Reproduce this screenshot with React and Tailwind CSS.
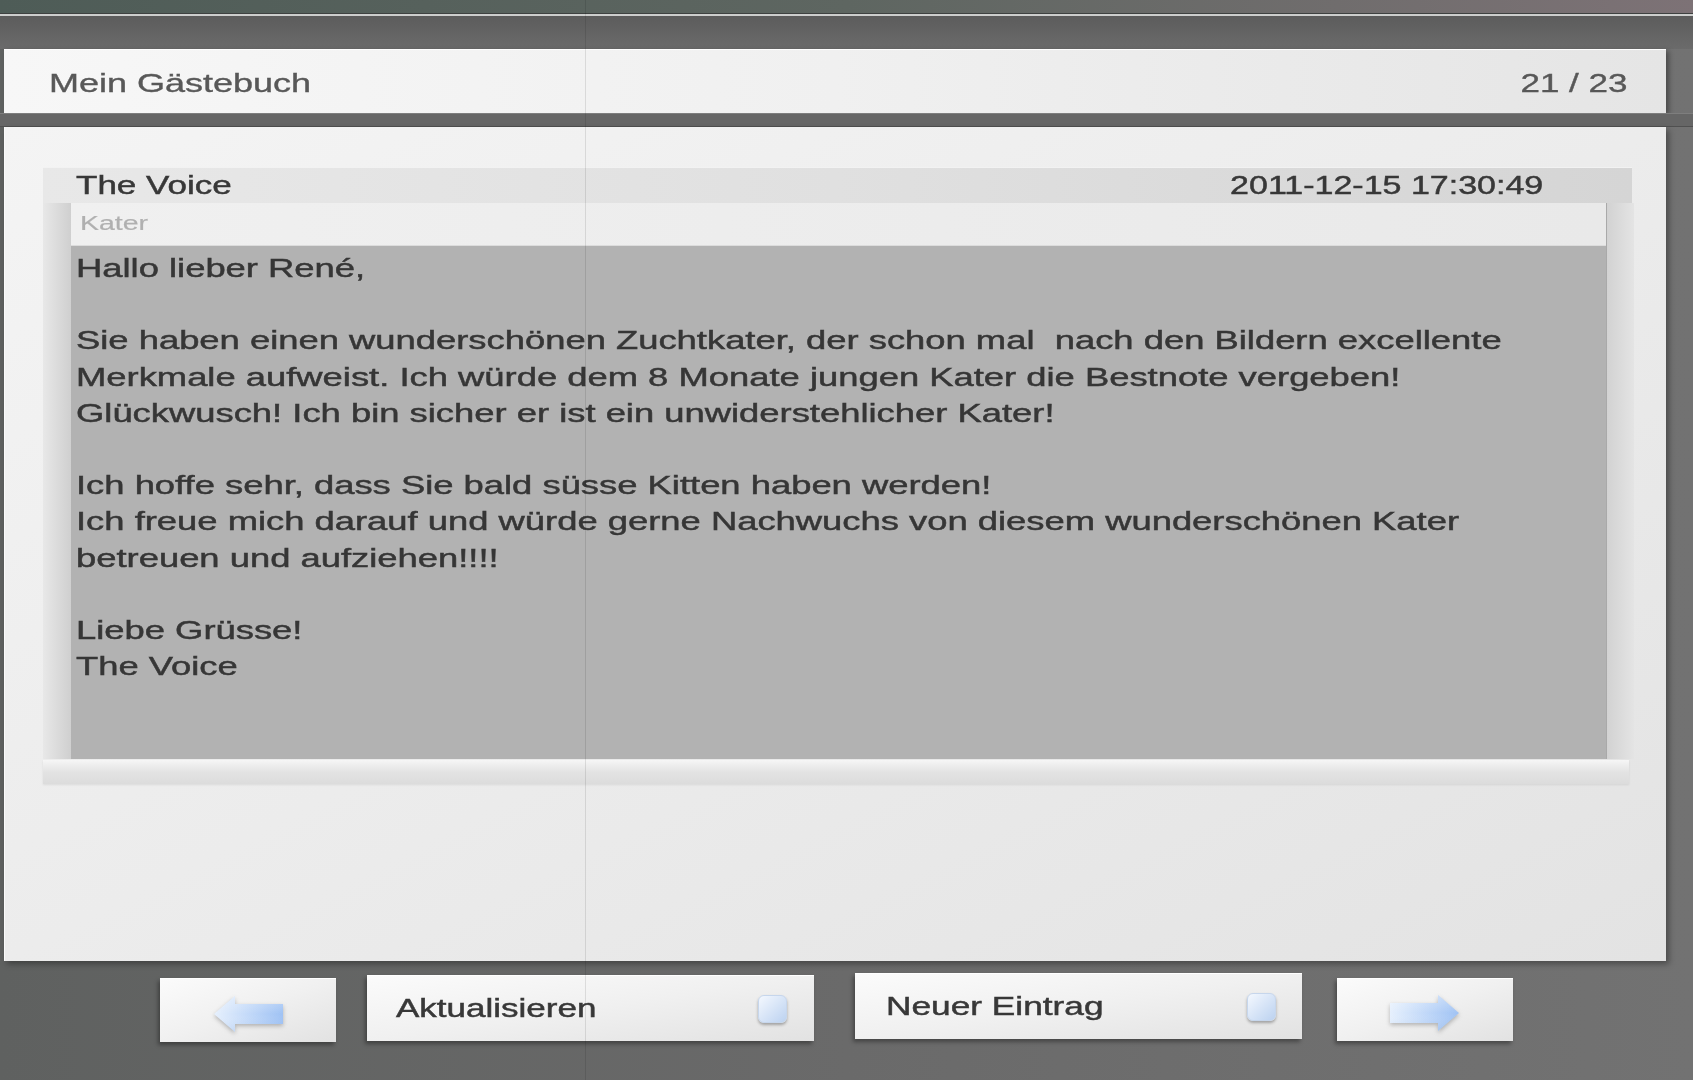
import React from "react";

function Arrow({ dir, id }) {
  const d =
    dir === "left"
      ? "M70 9 H22 V1 L1 19 L22 37 V29 H70 Z"
      : "M0 9 H48 V1 L69 19 L48 37 V29 H0 Z";
  return (
    <svg width="70" height="38" viewBox="0 0 70 38" className="drop-shadow-[0_2px_2px_rgba(0,0,0,0.25)]">
      <defs>
        <linearGradient id={id} x1="0" y1="0" x2="1" y2="0">
          <stop offset="0" stopColor="#e6f0fd" />
          <stop offset="1" stopColor="#9fc2f4" />
        </linearGradient>
        <linearGradient id={id + "v"} x1="0" y1="0" x2="0" y2="1">
          <stop offset="0" stopColor="#ffffff" stopOpacity="0.35" />
          <stop offset="0.5" stopColor="#ffffff" stopOpacity="0" />
          <stop offset="1" stopColor="#6f93c8" stopOpacity="0.15" />
        </linearGradient>
      </defs>
      <path d={d} fill={`url(#${id})`} />
      <path d={d} fill={`url(#${id}v)`} />
    </svg>
  );
}

function Indicator() {
  return (
    <div className="w-[29px] h-[28px] rounded-[6px] border border-[#c6d6ec] bg-linear-to-br from-[#f4f8fe] to-[#bcd2f0] shadow-[0_2px_3px_rgba(0,0,0,0.3)]" />
  );
}

export default function App() {
  return (
    <div className="relative w-[1693px] h-[1080px] overflow-hidden flex flex-col bg-linear-to-r from-[#5f6160] via-[#6a6a6a] to-[#727272] font-['Liberation_Sans',Arial,sans-serif]">
      {/* top strip */}
      <div className="h-[13px] bg-linear-to-r from-[#4e5c57] via-[#5e6661] to-[#7d7276]" />
      <div className="h-px bg-[#3e4140]" />
      <div className="h-[2px] bg-[#cdcecd]" />
      <div className="h-[33px] bg-linear-to-b from-[#5c5c5c] to-[#6b6b6b]" />

      {/* header bar */}
      <div className="ml-[4px] w-[1662px] h-[64px] flex items-center justify-between pl-[45px] pr-[39px] pt-[3px] bg-linear-to-r from-[#f7f7f7] via-[#f0f0f0] to-[#e5e5e5] border-t border-white shadow-[3px_2px_5px_rgba(0,0,0,0.35)]">
        <span className="inline-block origin-left scale-x-[1.44] text-[25px] leading-none text-[#585858] [-webkit-text-stroke:0.35px_#585858]">
          Mein Gästebuch
        </span>
        <span className="inline-block origin-right scale-x-[1.4] text-[25px] leading-none text-[#585858] [-webkit-text-stroke:0.35px_#585858]">
          21 / 23
        </span>
      </div>

      <div className="h-[14px] border-t border-[#7e7e7e] border-b border-b-[#505050] bg-[#666666]" />

      {/* main panel */}
      <div className="ml-[4px] w-[1662px] h-[834px] pt-[40px] pl-[38px] bg-linear-to-br from-[#f4f4f4] via-[#ececec] to-[#e3e3e3] border-l border-[#fafafa] shadow-[3px_3px_6px_rgba(0,0,0,0.35)]">
        <div className="w-[1591px] flex flex-col">
          {/* entry header row */}
          <div className="w-[1589px] h-[36px] flex items-center justify-between pl-[33px] pr-[89px] bg-linear-to-r from-[#e8e8e8] via-[#e0e0e0] to-[#d5d5d5] border-t border-[#f2f2f2]">
            <span className="inline-block origin-left scale-x-[1.4] text-[25px] leading-none text-[#383838] [-webkit-text-stroke:0.45px_#383838]">
              The Voice
            </span>
            <span className="inline-block origin-right scale-x-[1.36] text-[25px] leading-none text-[#383838] [-webkit-text-stroke:0.45px_#383838]">
              2011-12-15 17:30:49
            </span>
          </div>

          {/* content with gutters */}
          <div className="flex">
            <div className="w-[28px] bg-linear-to-r from-[#e8e8e8] to-[#cfcfcf]" />
            <div className="w-[1535px] flex flex-col">
              <div className="h-[43px] flex items-center pl-[9px] bg-linear-to-r from-[#f0f0f0] to-[#e9e9e9] border-b border-[#dcdcdc]">
                <span className="inline-block origin-left scale-x-[1.46] text-[19.5px] leading-none text-[#b0b0b0] [-webkit-text-stroke:0.2px_#b0b0b0]">
                  Kater
                </span>
              </div>
              <div className="h-[513px] bg-[#b2b2b2] pl-[5px] pt-[4px] overflow-hidden">
                <div className="origin-left scale-x-[1.455] whitespace-pre text-[25px] leading-[36.2px] text-[#363636] [-webkit-text-stroke:0.45px_#363636]">
                  <div>Hallo lieber René,</div>
                  <div>{" "}</div>
                  <div>{"Sie haben einen wunderschönen Zuchtkater, der schon mal  nach den Bildern excellente"}</div>
                  <div>Merkmale aufweist. Ich würde dem 8 Monate jungen Kater die Bestnote vergeben!</div>
                  <div>Glückwusch! Ich bin sicher er ist ein unwiderstehlicher Kater!</div>
                  <div>{" "}</div>
                  <div>Ich hoffe sehr, dass Sie bald süsse Kitten haben werden!</div>
                  <div>Ich freue mich darauf und würde gerne Nachwuchs von diesem wunderschönen Kater</div>
                  <div>betreuen und aufziehen!!!!</div>
                  <div>{" "}</div>
                  <div>Liebe Grüsse!</div>
                  <div>The Voice</div>
                </div>
              </div>
            </div>
            <div className="w-[28px] bg-linear-to-r from-[#d2d2d2] to-[#e4e4e4] border-l border-[#a9a9a9]" />
          </div>

          {/* bottom bar */}
          <div className="mt-px w-[1586px] h-[24px] bg-linear-to-b from-[#f6f6f6] via-[#e3e3e3] to-[#dcdcdc] shadow-[0_1px_2px_rgba(0,0,0,0.08)]" />
        </div>
      </div>

      {/* buttons row */}
      <div className="flex items-start pl-[160px]">
        <div className="mt-[17px] w-[176px] h-[64px] flex items-center justify-center pt-[6px] bg-linear-to-br from-[#fbfbfb] via-[#f0f0f0] to-[#e2e2e2] border-t border-white shadow-[-2px_3px_4px_rgba(0,0,0,0.35)]">
          <Arrow dir="left" id="arrL" />
        </div>
        <div className="ml-[31px] mt-[14px] w-[447px] h-[66px] flex items-center justify-between pl-[29px] pr-[27px] bg-linear-to-br from-[#fbfbfb] via-[#f0f0f0] to-[#e2e2e2] border-t border-white shadow-[-2px_3px_4px_rgba(0,0,0,0.35)]">
          <span className="inline-block origin-left scale-x-[1.4] text-[25px] leading-none text-[#383838] [-webkit-text-stroke:0.45px_#383838]">
            Aktualisieren
          </span>
          <Indicator />
        </div>
        <div className="ml-[41px] mt-[12px] w-[447px] h-[66px] flex items-center justify-between pl-[31px] pr-[26px] bg-linear-to-br from-[#fbfbfb] via-[#f0f0f0] to-[#e2e2e2] border-t border-white shadow-[-2px_3px_4px_rgba(0,0,0,0.35)]">
          <span className="inline-block origin-left scale-x-[1.41] text-[25px] leading-none text-[#383838] [-webkit-text-stroke:0.45px_#383838]">
            Neuer Eintrag
          </span>
          <Indicator />
        </div>
        <div className="ml-[35px] mt-[17px] w-[176px] h-[63px] flex items-center justify-center pt-[6px] bg-linear-to-br from-[#fbfbfb] via-[#f0f0f0] to-[#e2e2e2] border-t border-white shadow-[-2px_3px_4px_rgba(0,0,0,0.35)]">
          <Arrow dir="right" id="arrR" />
        </div>
      </div>

      {/* faint seam line from the original capture */}
      <div className="pointer-events-none absolute top-0 bottom-0 left-[585px] w-px bg-black/10" />
    </div>
  );
}
